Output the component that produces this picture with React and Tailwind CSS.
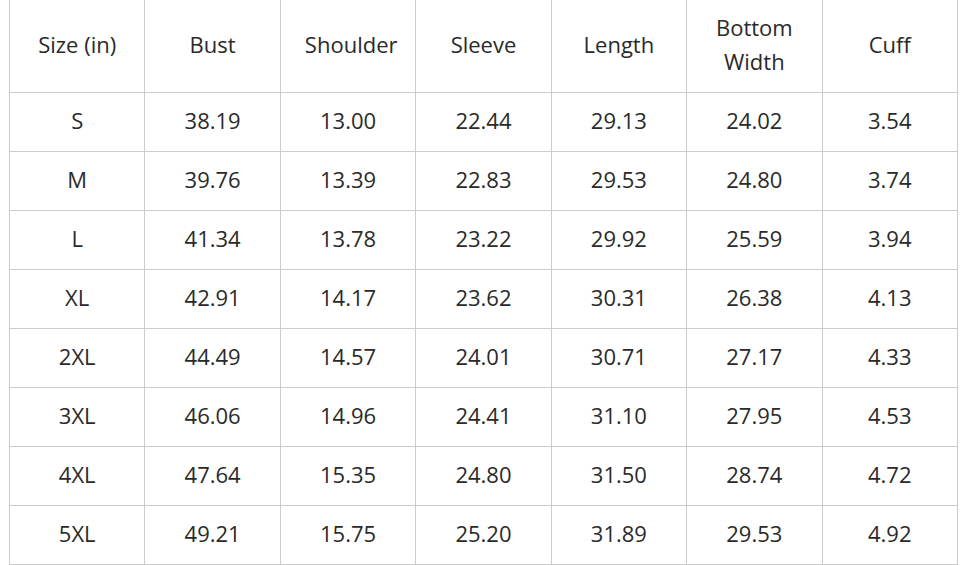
const headers = ['Size (in)', 'Bust', 'Shoulder', 'Sleeve', 'Length', 'Bottom Width', 'Cuff'];

const rows = [
  ['S', '38.19', '13.00', '22.44', '29.13', '24.02', '3.54'],
  ['M', '39.76', '13.39', '22.83', '29.53', '24.80', '3.74'],
  ['L', '41.34', '13.78', '23.22', '29.92', '25.59', '3.94'],
  ['XL', '42.91', '14.17', '23.62', '30.31', '26.38', '4.13'],
  ['2XL', '44.49', '14.57', '24.01', '30.71', '27.17', '4.33'],
  ['3XL', '46.06', '14.96', '24.41', '31.10', '27.95', '4.53'],
  ['4XL', '47.64', '15.35', '24.80', '31.50', '28.74', '4.72'],
  ['5XL', '49.21', '15.75', '25.20', '31.89', '29.53', '4.92'],
];

export default function App() {
  return (
    <div className="w-[960px] h-[565px] overflow-hidden bg-white">
      <table
        className="-mt-px ml-[9px] w-[949px] table-fixed border-collapse text-[#2a2a2a] text-[22px] leading-[34px]"
        style={{ fontFamily: '"Open Sans", "Noto Sans", sans-serif' }}
      >
        <thead>
          <tr>
            {headers.map((h) => (
              <th key={h} className="h-[93px] border border-[#cccccc] px-6 pt-0 pb-[5px] text-center font-normal">
                {h}
              </th>
            ))}
          </tr>
        </thead>
        <tbody>
          {rows.map((r) => (
            <tr key={r[0]}>
              {r.map((c, i) => (
                <td key={i} className="h-[59px] border border-[#cccccc] px-0 pt-0 pb-[4px] text-center">
                  {c}
                </td>
              ))}
            </tr>
          ))}
        </tbody>
      </table>
    </div>
  );
}
